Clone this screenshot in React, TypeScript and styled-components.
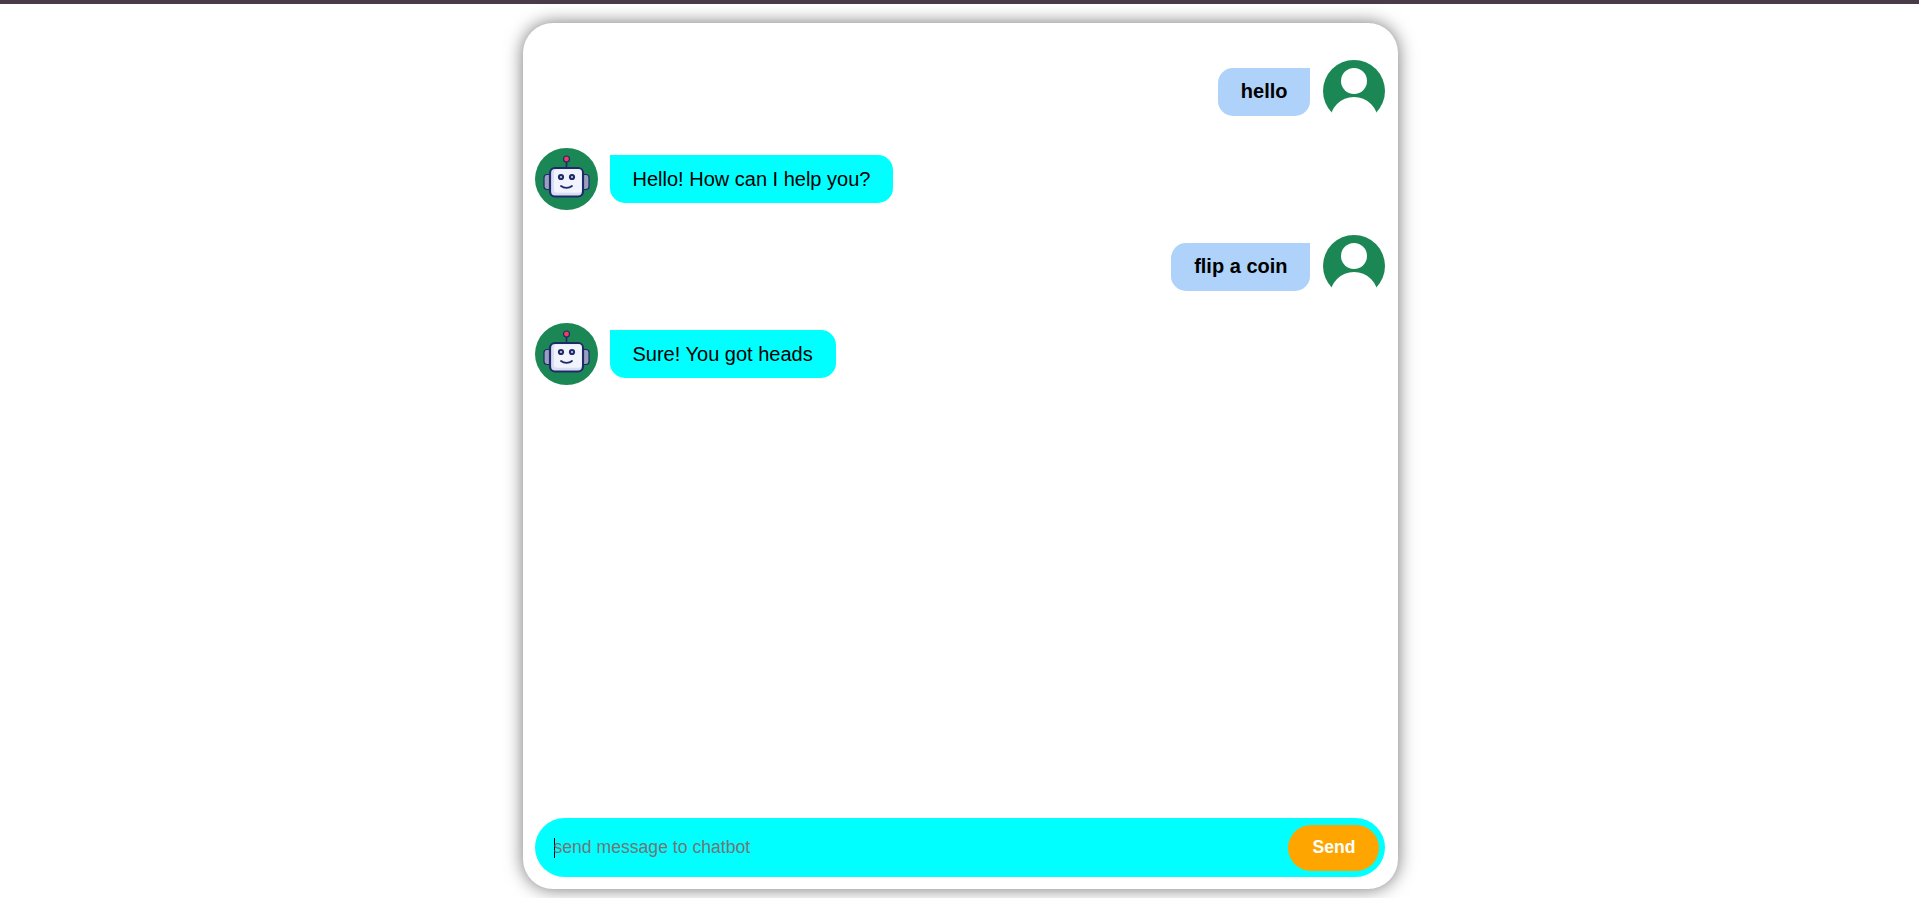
import { FC } from "react";
import styled, { createGlobalStyle } from "styled-components";

type Message = {
    sender: "user" | "robot";
    text: string;
};

const messages: Message[] = [
    { sender: "user", text: "hello" },
    { sender: "robot", text: "Hello! How can I help you?" },
    { sender: "user", text: "flip a coin" },
    { sender: "robot", text: "Sure! You got heads" },
];

const UserIcon: FC = () => (
    <AvatarSvg viewBox="0 0 62 62" $size={62}>
        <circle cx="31" cy="31" r="31" fill="#1b8755" />
        <circle cx="31" cy="21" r="13" fill="#fff" />
        <circle cx="31" cy="61" r="24" fill="#fff" />
        <rect x="0" y="56" width="62" height="6" fill="#fff" />
    </AvatarSvg>
);

const RobotIcon: FC = () => (
    <AvatarSvg viewBox="0 0 63 62" $size={63}>
        <ellipse cx="31.5" cy="31" rx="31.5" ry="31" fill="#1b8755" />
        <line x1="31.5" y1="13" x2="31.5" y2="20" stroke="#1f2a6b" strokeWidth="1.6" />
        <circle cx="31.5" cy="11" r="3" fill="#ef3f5f" stroke="#1f2a6b" strokeWidth="1.2" />
        <rect x="9" y="26.5" width="9" height="15" rx="3" fill="#9a9fbe" stroke="#1f2a6b" strokeWidth="1.2" />
        <rect x="45" y="26.5" width="9" height="15" rx="3" fill="#9a9fbe" stroke="#1f2a6b" strokeWidth="1.2" />
        <rect x="15" y="20" width="33" height="28.5" rx="5" fill="#d9def3" stroke="#1f2a6b" strokeWidth="2.2" />
        <rect x="19" y="21.2" width="27.8" height="23.5" rx="3" fill="#f1f4fc" />
        <circle cx="26" cy="29" r="3.1" fill="#1f2a6b" />
        <circle cx="37" cy="29" r="3.1" fill="#1f2a6b" />
        <circle cx="26" cy="29" r="1.1" fill="#c9cfea" />
        <circle cx="37" cy="29" r="1.1" fill="#c9cfea" />
        <path d="M26 38 C29 40.5 34 40.5 37 38" fill="none" stroke="#1f2a6b" strokeWidth="1.8" strokeLinecap="round" />
    </AvatarSvg>
);

const App: FC = () => {
    return (
        <>
            <GlobalStyle />
            <TopBar />
            <Page>
                <ChatPanel>
                    <MessageList>
                        {messages.map((message, index) => (
                            <MessageRow key={index} $sender={message.sender}>
                                <Bubble $sender={message.sender}>{message.text}</Bubble>
                                {message.sender === "user" ? <UserIcon /> : <RobotIcon />}
                            </MessageRow>
                        ))}
                    </MessageList>
                    <InputBar>
                        <Caret />
                        <MessageInput placeholder="send message to chatbot" />
                        <SendButton>Send</SendButton>
                    </InputBar>
                </ChatPanel>
            </Page>
        </>
    );
};

const GlobalStyle = createGlobalStyle`
    html, body {
        margin: 0;
        padding: 0;
        background: #ffffff;
        overflow: hidden;
    }

    * {
        box-sizing: border-box;
    }
`;

const TopBar = styled.div`
    height: 4px;
    background: #4a3b4a;
`;

const Page = styled.div`
    display: flex;
    justify-content: center;
    padding: 19px 0 0 1px;
    height: 894px;
`;

const ChatPanel = styled.div`
    display: flex;
    flex-direction: column;
    justify-content: space-between;

    width: 875px;
    height: 866px;
    padding: 37px 13px 12px 12px;
    background: #ffffff;
    border-radius: 30px;
    box-shadow: 0 0 18px rgba(0, 0, 0, 0.55);
    font-family: "Liberation Sans", Arial, sans-serif;
`;

const MessageList = styled.div`
    display: flex;
    flex-direction: column;
    gap: 25.5px;
`;

const MessageRow = styled.div<{ $sender: Message["sender"] }>`
    display: flex;
    flex-direction: ${({ $sender }) => ($sender === "user" ? "row" : "row-reverse")};
    justify-content: flex-end;
    align-items: center;
    gap: ${({ $sender }) => ($sender === "user" ? "13px" : "12px")};
`;

const AvatarSvg = styled.svg<{ $size: number }>`
    flex: none;
    display: block;
    width: ${({ $size }) => $size}px;
    height: 62px;
`;

const Bubble = styled.div<{ $sender: Message["sender"] }>`
    height: 48px;
    margin-top: ${({ $sender }) => ($sender === "user" ? "2px" : "0")};
    padding: ${({ $sender }) => ($sender === "user" ? "0 22px 0 23px" : "0 23px")};
    font-size: 20px;
    line-height: ${({ $sender }) => ($sender === "user" ? "46px" : "48px")};
    color: #000000;
    font-weight: ${({ $sender }) => ($sender === "user" ? 700 : 400)};
    background: ${({ $sender }) => ($sender === "user" ? "#aed2fa" : "#00ffff")};
    border-radius: ${({ $sender }) => ($sender === "user" ? "15px 0 15px 15px" : "0 15px 15px 15px")};
`;

const InputBar = styled.div`
    display: flex;
    align-items: center;

    height: 59px;
    padding: 0 6px 0 19px;
    background: #00ffff;
    border-radius: 30px;
`;

const Caret = styled.span`
    flex: none;
    width: 1px;
    height: 20px;
    margin-right: -1px;
    background: #000000;
`;

const MessageInput = styled.input`
    flex: 1;
    min-width: 0;
    padding: 0;
    border: none;
    outline: none;
    background: transparent;
    color: #000000;
    font-family: "Liberation Sans", Arial, sans-serif;
    font-size: 17.6px;

    &::placeholder {
        color: #757575;
    }
`;

const SendButton = styled.button`
    flex: none;
    width: 91px;
    height: 46px;
    padding: 0 0 0 2px;
    border: none;
    border-radius: 23px;
    background: #ffa500;
    color: #ffffff;
    font-family: "Liberation Sans", Arial, sans-serif;
    font-size: 17.6px;
    font-weight: 700;
    cursor: pointer;
`;

export default App;
